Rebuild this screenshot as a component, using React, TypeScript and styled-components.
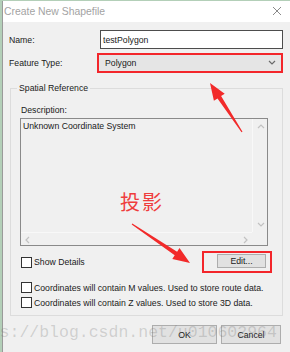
import React from 'react';
import styled, { createGlobalStyle } from 'styled-components';

const GlobalStyle = createGlobalStyle`
  html, body {
    margin: 0;
    padding: 0;
  }
  body {
    width: 290px;
    height: 352px;
    overflow: hidden;
    background: #b3cfb8;
    font-family: "Liberation Sans", Arial, sans-serif;
  }
`;

const Stage = styled.div`
  position: relative;
  width: 290px;
  height: 352px;
  overflow: hidden;
  padding: 1px 0 0 2px;
  box-sizing: border-box;
`;

const Dialog = styled.div`
  height: 100%;
  background: #f0f0f0;
  border-left: 1px solid #9a9a9a;
  display: flex;
  flex-direction: column;
  color: #1a1a1a;
  font-size: 8.7px;
`;

const TitleBar = styled.div`
  height: 21px;
  flex: none;
  background: #fff;
  display: flex;
  align-items: center;
  justify-content: space-between;
  padding: 0 8px 1px 1px;
  box-sizing: border-box;
`;

const Title = styled.span`
  font-size: 10.4px;
  color: #a3a3a3;
`;

const Body = styled.div`
  display: flex;
  flex-direction: column;
  padding: 8px 7px 0 7px;
`;

const FieldRow = styled.div<{ $gap?: number }>`
  display: grid;
  grid-template-columns: 90px 1fr;
  align-items: center;
  margin-top: ${(p) => p.$gap ?? 0}px;
`;

const Label = styled.span`
  margin-left: -1px;
  line-height: 12px;
`;

const TextInput = styled.input`
  height: 19px;
  box-sizing: border-box;
  border: 1px solid #4d4d4d;
  background: #fff;
  padding: 0 2px;
  margin: 0;
  font: inherit;
  color: inherit;
  outline: none;
`;

const SelectBox = styled.div`
  height: 20px;
  margin-left: -3px;
  box-sizing: border-box;
  border: 2px solid #f3262b;
  background: #e5e5e5;
  display: flex;
  align-items: center;
  justify-content: space-between;
  padding: 0 5px 0 6px;
`;

const Group = styled.div`
  position: relative;
  margin-top: 15px;
  border: 1px solid #dcdcdc;
  padding: 15px 14px 5px 9px;
  display: flex;
  flex-direction: column;
`;

const Legend = styled.span`
  position: absolute;
  top: -7px;
  left: 6px;
  padding: 0 2px;
  line-height: 12px;
  background: #f0f0f0;
`;

const Caption = styled.div`
  line-height: 12px;
  padding-left: 1px;
`;

const TextBox = styled.div`
  margin-top: 2px;
  height: 128px;
  box-sizing: border-box;
  border: 1px solid #8a8a8a;
  display: grid;
  grid-template-columns: 1fr 15px;
  grid-template-rows: 1fr 13px;
`;

const TextArea = styled.div`
  padding: 1px 2px;
  line-height: 12px;
`;

const VScroll = styled.div`
  display: flex;
  flex-direction: column;
  justify-content: space-between;
  border-left: 1px solid #f8f8f8;
`;

const HScroll = styled.div`
  display: flex;
  justify-content: space-between;
  border-top: 1px solid #f8f8f8;
`;

const ScrollArrow = styled.div<{ $size: number }>`
  width: ${(p) => p.$size}px;
  height: ${(p) => p.$size}px;
  display: flex;
  align-items: center;
  justify-content: center;
`;

const Row = styled.div<{ $height: number; $gap: number }>`
  display: flex;
  align-items: center;
  justify-content: space-between;
  height: ${(p) => p.$height}px;
  margin-top: ${(p) => p.$gap}px;
`;

const CheckLabel = styled.label`
  display: flex;
  align-items: center;
  gap: 2px;
  margin-left: 1px;
  white-space: nowrap;
`;

const CheckBox = styled.span`
  width: 11px;
  height: 11px;
  box-sizing: border-box;
  border: 1px solid #333;
  background: #fff;
`;

const Highlight = styled.div`
  margin-right: -4px;
  height: 22px;
  box-sizing: border-box;
  border: 2px solid #f3262b;
  padding: 1px 4px 3px 13px;
`;

const Button = styled.button<{ $width: number; $height: number }>`
  width: ${(p) => p.$width}px;
  height: ${(p) => p.$height}px;
  box-sizing: border-box;
  margin: 0;
  padding: 0;
  border: 1px solid #adadad;
  background: #e1e1e1;
  font: inherit;
  color: inherit;
`;

const Footer = styled.div`
  display: flex;
  justify-content: flex-end;
  gap: 4px;
  margin-top: 9px;
  padding-right: 2px;
`;

const Overlay = styled.svg`
  position: absolute;
  left: 0;
  top: 0;
  pointer-events: none;
`;

const Note = styled.div`
  position: absolute;
  left: 120px;
  top: 187px;
  font-family: "Noto Sans CJK SC", sans-serif;
  font-size: 20px;
  letter-spacing: 2px;
  color: #ef3d3d;
`;

const Watermark = styled.div`
  position: absolute;
  left: -40px;
  top: 325px;
  font-family: "Liberation Mono", monospace;
  font-size: 16.5px;
  line-height: 16px;
  color: rgba(110, 110, 110, 0.26);
  white-space: nowrap;
  pointer-events: none;
`;

const Chevron = ({ dir, color = '#c2c2c2' }: { dir: 'up' | 'down' | 'left' | 'right'; color?: string }) => {
  const d = {
    up: 'M1 5 L4 2 L7 5',
    down: 'M1 2 L4 5 L7 2',
    left: 'M5 1 L2 4 L5 7',
    right: 'M2 1 L5 4 L2 7',
  }[dir];
  return (
    <svg width="8" height="8" viewBox="0 0 8 8">
      <path d={d} fill="none" stroke={color} strokeWidth="1.2" />
    </svg>
  );
};

// tapered red arrow from tail to tip
const arrowPoints = (tx: number, ty: number, hx: number, hy: number) => {
  const len = Math.hypot(hx - tx, hy - ty);
  const ux = (hx - tx) / len;
  const uy = (hy - ty) / len;
  const nx = -uy;
  const ny = ux;
  const bx = hx - ux * 17;
  const by = hy - uy * 17;
  const pts = [
    [tx + nx * 0.6, ty + ny * 0.6],
    [bx + nx * 2.2, by + ny * 2.2],
    [bx + nx * 6.5, by + ny * 6.5],
    [hx, hy],
    [bx - nx * 6.5, by - ny * 6.5],
    [bx - nx * 2.2, by - ny * 2.2],
    [tx - nx * 0.6, ty - ny * 0.6],
  ];
  return pts.map((p) => p.map((v) => v.toFixed(1)).join(',')).join(' ');
};

const App = () => (
  <>
    <GlobalStyle />
    <Stage>
      <Dialog>
        <TitleBar>
          <Title>Create New Shapefile</Title>
          <svg width="10" height="10" viewBox="0 0 10 10">
            <path d="M1 1 L9 9 M9 1 L1 9" stroke="#8a8a8a" strokeWidth="1" />
          </svg>
        </TitleBar>
        <Body>
          <FieldRow>
            <Label>Name:</Label>
            <TextInput readOnly value="testPolygon" />
          </FieldRow>
          <FieldRow $gap={4}>
            <Label>Feature Type:</Label>
            <SelectBox>
              <span>Polygon</span>
              <Chevron dir="down" color="#6a6a6a" />
            </SelectBox>
          </FieldRow>
          <Group>
            <Legend>Spatial Reference</Legend>
            <Caption>Description:</Caption>
            <TextBox>
              <TextArea>Unknown Coordinate System</TextArea>
              <VScroll>
                <ScrollArrow $size={15}>
                  <Chevron dir="up" />
                </ScrollArrow>
                <ScrollArrow $size={15}>
                  <Chevron dir="down" />
                </ScrollArrow>
              </VScroll>
              <HScroll>
                <ScrollArrow $size={13}>
                  <Chevron dir="left" />
                </ScrollArrow>
                <ScrollArrow $size={13}>
                  <Chevron dir="right" />
                </ScrollArrow>
              </HScroll>
              <div />
            </TextBox>
            <Row $height={22} $gap={5}>
              <CheckLabel>
                <CheckBox />
                Show Details
              </CheckLabel>
              <Highlight>
                <Button $width={49} $height={14}>Edit...</Button>
              </Highlight>
            </Row>
            <Row $height={15} $gap={7}>
              <CheckLabel>
                <CheckBox />
                Coordinates will contain M values. Used to store route data.
              </CheckLabel>
            </Row>
            <Row $height={15} $gap={0}>
              <CheckLabel>
                <CheckBox />
                Coordinates will contain Z values. Used to store 3D data.
              </CheckLabel>
            </Row>
          </Group>
          <Footer>
            <Button $width={65} $height={19}>OK</Button>
            <Button $width={60} $height={19}>Cancel</Button>
          </Footer>
        </Body>
      </Dialog>
      <Note>投影</Note>
      <Overlay width="290" height="352">
        <polygon points={arrowPoints(242, 132, 210, 83)} fill="#f22a2a" />
        <polygon points={arrowPoints(132, 224, 190, 263)} fill="#f22a2a" />
      </Overlay>
      <Watermark>https://blog.csdn.net/u010602964</Watermark>
    </Stage>
  </>
);

export default App;
